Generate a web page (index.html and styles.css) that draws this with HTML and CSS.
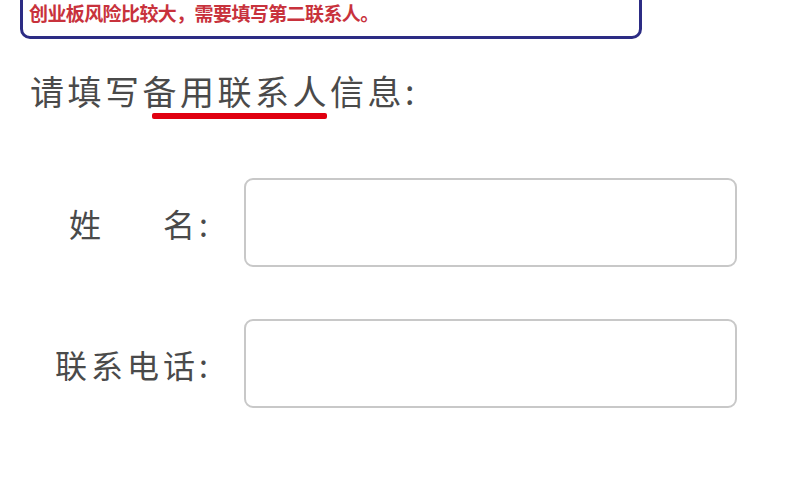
FILE: index.html
```html
<!DOCTYPE html>
<html lang="zh-CN">
<head>
    <meta charset="UTF-8">
    <meta name="viewport" content="width=device-width, initial-scale=1.0">
    <title>备用联系人</title>
    <link rel="stylesheet" href="styles.css">
</head>
<body>

<div class="page">
    <div class="notice">创业板风险比较大，需要填写第二联系人。</div>

    <h2 class="title">请填写<span class="mark">备用联系人</span>信息:</h2>

    <form class="contact-form">
        <div class="form-row">
            <label for="name" class="field-label">姓<span class="gap"></span>名:</label>
            <input type="text" id="name" name="name">
        </div>
        <div class="form-row">
            <label for="phone" class="field-label">联系电话:</label>
            <input type="tel" id="phone" name="phone">
        </div>
    </form>
</div>

</body>
</html>
```

FILE: styles.css
```css
:root {
    --navy: #2c2c84;
    --red-text: #c8323c;
    --red-line: #e00010;
    --text-color: #4a4a4a;
    --input-border: #c8c8c8;
    --font-family: "Noto Sans CJK SC", "Noto Sans", sans-serif;
}

*, *::before, *::after {
    box-sizing: border-box;
}

body {
    margin: 0;
    background: #ffffff;
    font-family: var(--font-family);
    color: var(--text-color);
    overflow: hidden;
}

.page {
    padding: 0 20px;
}

/* 顶部提示框（上边被裁掉） */
.notice {
    width: 622px;
    margin-top: -22px;
    padding: 22px 0 13px 6px;
    border: 3px solid var(--navy);
    border-radius: 10px;
    font-size: 19px;
    line-height: 20px;
    font-weight: 700;
    letter-spacing: -0.6px;
    color: var(--red-text);
}

.title {
    margin: 32px 0 0;
    padding-left: 10px;
    font-size: 34px;
    line-height: 40px;
    font-weight: 400;
    letter-spacing: 3.5px;
}

.mark {
    position: relative;
}

.mark::after {
    content: "";
    position: absolute;
    left: 9px;
    right: 3px;
    bottom: -4px;
    height: 6px;
    border-radius: 2px;
    background: var(--red-line);
}

.contact-form {
    margin-top: 67px;
    display: flex;
    flex-direction: column;
    gap: 52px;
}

.form-row {
    display: flex;
    align-items: center;
    gap: 32px;
}

.field-label {
    width: 192px;
    display: flex;
    justify-content: flex-end;
    font-size: 32px;
    line-height: 40px;
    letter-spacing: 4px;
    color: var(--text-color);
}

.gap {
    display: inline-block;
    width: 58px;
}

.form-row input {
    width: 493px;
    height: 89px;
    border: 2px solid var(--input-border);
    border-radius: 9px;
    background: #fff;
    font-size: 26px;
    padding: 0 14px;
}

.form-row input:focus {
    outline: none;
    border-color: #9a9a9a;
}
```
